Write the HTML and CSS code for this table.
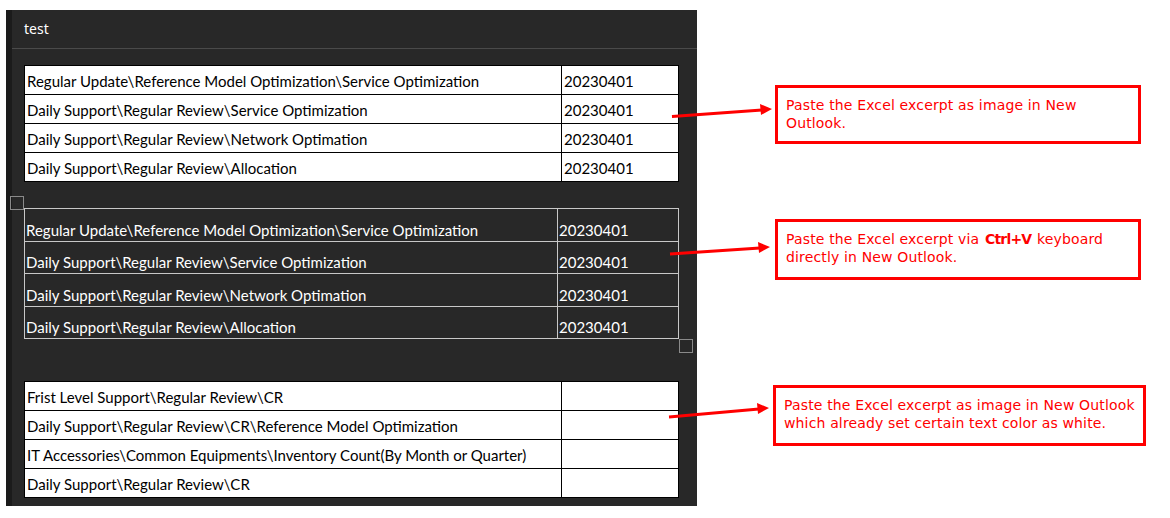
FILE: index.html
```html
<!DOCTYPE html>
<html>
<head>
<meta charset="utf-8">
<link rel="stylesheet" href="styles.css">
</head>
<body>
<div class="page">
  <div class="panel">
    <div class="header">test</div>
    <div class="content">
      <table class="sheet light">
        <tr><td class="c1">Regular Update\Reference Model Optimization\Service Optimization</td><td>20230401</td></tr>
        <tr><td class="c1">Daily Support\Regular Review\Service Optimization</td><td>20230401</td></tr>
        <tr><td class="c1">Daily Support\Regular Review\Network Optimation</td><td>20230401</td></tr>
        <tr><td class="c1">Daily Support\Regular Review\Allocation</td><td>20230401</td></tr>
      </table>
      <div class="pasted">
        <span class="handle handle-tl"></span>
        <table class="sheet dark">
          <tr><td class="c1">Regular Update\Reference Model Optimization\Service Optimization</td><td>20230401</td></tr>
          <tr><td class="c1">Daily Support\Regular Review\Service Optimization</td><td>20230401</td></tr>
          <tr><td class="c1">Daily Support\Regular Review\Network Optimation</td><td>20230401</td></tr>
          <tr><td class="c1">Daily Support\Regular Review\Allocation</td><td>20230401</td></tr>
        </table>
        <span class="handle handle-br"></span>
      </div>
      <table class="sheet light third">
        <tr><td class="c1">Frist Level Support\Regular Review\CR</td><td></td></tr>
        <tr><td class="c1">Daily Support\Regular Review\CR\Reference Model Optimization</td><td></td></tr>
        <tr><td class="c1">IT Accessories\Common Equipments\Inventory Count(By Month or Quarter)</td><td></td></tr>
        <tr><td class="c1">Daily Support\Regular Review\CR</td><td></td></tr>
      </table>
    </div>
  </div>
  <div class="notes">
    <div class="note note1">Paste the Excel excerpt as image in New Outlook.</div>
    <div class="note note2">Paste the Excel excerpt via <b>Ctrl+V</b> keyboard directly in New Outlook.</div>
    <div class="note note3">Paste the Excel excerpt as image in New Outlook which already set certain text color as white.</div>
  </div>
  <svg class="arrows" width="1170" height="518" viewBox="0 0 1170 518">
    <g stroke="#ff0000" stroke-width="3" fill="#ff0000">
      <line x1="672" y1="116.5" x2="762" y2="110"/>
      <polygon points="772,109 760,104 761,115" stroke="none"/>
      <line x1="670" y1="254" x2="760" y2="248"/>
      <polygon points="770,247 758,242 759,253" stroke="none"/>
      <line x1="669" y1="417" x2="759" y2="409"/>
      <polygon points="769,408 757,403 758,414" stroke="none"/>
    </g>
  </svg>
</div>
</body>
</html>
```
FILE: styles.css
```css
html, body {
  margin: 0;
  padding: 0;
  background: #ffffff;
}
.page {
  position: relative;
  width: 1170px;
  height: 518px;
  display: flex;
  align-items: flex-start;
  padding: 10px 0 0 6px;
  box-sizing: border-box;
}
.panel {
  width: 685px;
  height: 496px;
  background: #282828;
  border-left: 6px solid #1b1b1b;
  flex: none;
}
.header {
  height: 39px;
  box-sizing: border-box;
  padding: 10px 0 0 12px;
  border-bottom: 1px solid #4a4a4a;
  color: #ffffff;
  font-family: "Noto Sans", "Open Sans", sans-serif;
  font-size: 14px;
  line-height: 18px;
}
.content {
  padding: 16px 0 0 12px;
}
.sheet {
  border-collapse: collapse;
  width: 655px;
  font-family: "Lato", "Liberation Sans", sans-serif;
  font-size: 15px;
  table-layout: fixed;
}
.sheet td {
  padding: 0 0 0 2px;
  white-space: nowrap;
  overflow: hidden;
}
.light {
  background: #ffffff;
  color: #000000;
}
.light td {
  border: 1px solid #000000;
  height: 25px;
  padding-top: 3px;
  line-height: 24px;
  vertical-align: top;
}
.light td.c1 {
  width: 534px;
}
.pasted {
  position: relative;
  width: 655px;
  margin-top: 26px;
}
.dark {
  color: #ffffff;
}
.dark td {
  border: 1px solid #c8c8c8;
  vertical-align: bottom;
  line-height: 20px;
  padding-left: 1px;
  padding-bottom: 1px;
}
.dark tr:nth-child(odd) td {
  height: 31px;
}
.dark tr:nth-child(even) td {
  height: 30px;
}
.dark td.c1 {
  width: 531px;
}
.handle {
  position: absolute;
  width: 12px;
  height: 12px;
  border: 1px solid #8a8a8a;
}
.handle-tl {
  left: -14px;
  top: -12px;
}
.handle-br {
  right: -14px;
  bottom: -14px;
}
.third {
  margin-top: 42px;
}
.notes {
  display: flex;
  flex-direction: column;
  margin-left: 78px;
}
.note {
  border: 3px solid #ff0000;
  color: #ff0000;
  font-family: "DejaVu Sans", sans-serif;
  font-size: 14px;
  letter-spacing: 0.15px;
  line-height: 18px;
  box-sizing: border-box;
  width: 366px;
  padding: 8px 4px 0 8px;
}
.note b {
  font-weight: bold;
  letter-spacing: -0.8px;
  margin: 0 1px;
}
.note1 {
  margin-top: 75px;
  height: 59px;
}
.note2 {
  margin-top: 75px;
  height: 61px;
}
.note3 {
  margin-top: 105px;
  margin-left: -2px;
  width: 373px;
  height: 61px;
  padding-right: 2px;
}
.arrows {
  position: absolute;
  left: 0;
  top: 0;
  pointer-events: none;
}
```
